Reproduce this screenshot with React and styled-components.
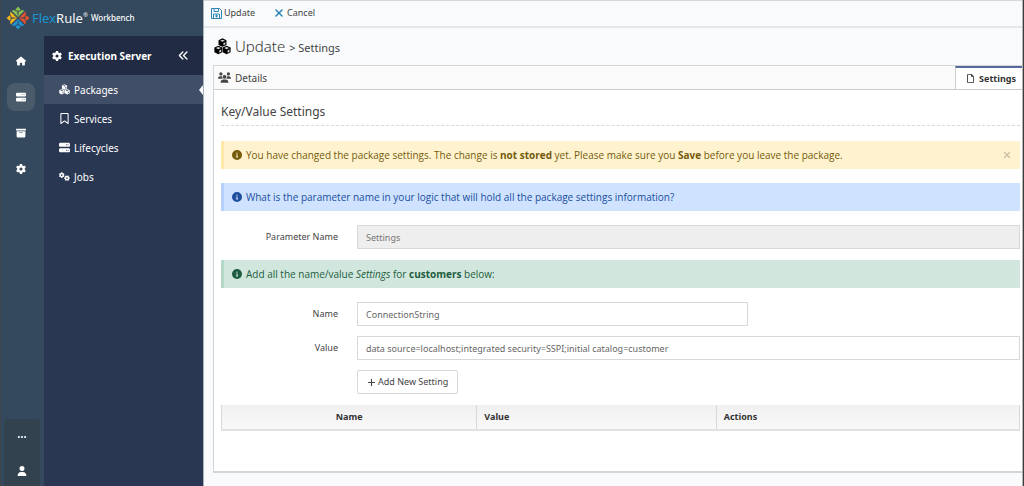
import React from "react";
import styled, { createGlobalStyle, css } from "styled-components";
import { FaHouse, FaServer, FaBoxArchive, FaGear, FaGears, FaRegBookmark, FaUsers, FaRegFile, FaCircleInfo, FaPlus, FaXmark, FaUser, FaEllipsis, FaAnglesLeft } from "react-icons/fa6";

const GlobalStyle = createGlobalStyle`
  * {
    box-sizing: border-box;
  }
  body {
    margin: 0;
    background: #f9fafc;
    color: #444;
    font-family: "Noto Sans", "Open Sans", sans-serif;
    font-size: 10px;
    line-height: 16px;
  }
  a {
    color: inherit;
    text-decoration: none;
  }
  button, input {
    font: inherit;
  }
  svg {
    display: block;
    flex: none;
  }
`;

const Page = styled.div`
  display: flex;
  min-height: 100vh;
  border-right: 1px solid #3c3c3c;
`;

const Sidebar = styled.aside`
  display: flex;
  flex-direction: column;
  flex: none;
  width: 204px;
  color: #fff;
  background: #34495e;
  border-left: 1px solid #3f4548;
  border-right: 1px solid #a9b0bd;
`;

const Brand = styled.a`
  display: flex;
  align-items: center;
  height: 36px;
  padding-left: 5px;
`;

const BrandName = styled.span`
  margin-left: 2px;
  font-size: 13px;
  color: #f4f6f8;

  b {
    color: #1b95d1;
    font-weight: 400;
  }
  sup {
    font-size: 6px;
    line-height: 1;
    vertical-align: 6px;
  }
`;

const BrandSub = styled.span`
  margin-left: 3px;
  font-size: 8px;
  font-weight: 500;
`;

const SideBody = styled.div`
  display: flex;
  flex: 1;
`;

const Rail = styled.nav`
  display: flex;
  flex-direction: column;
  justify-content: space-between;
  width: 43px;
`;

const RailGroup = styled.div`
  display: flex;
  flex-direction: column;
  align-items: center;
  gap: 8px;
  padding: ${(props) => (props.$bottom ? "4px 0 1px" : "11px 3px 0 0")};

  ${(props) =>
    props.$bottom &&
    css`
      gap: 6px;
      margin: 0 4px 0 3px;
      background: #32424f;
      border-radius: 4px 4px 0 0;
    `}
`;

const RailLink = styled.a`
  display: flex;
  align-items: center;
  justify-content: center;
  width: 28px;
  height: 28px;
  border-radius: 8px;
  background: ${(props) => (props.$active ? "#4a5b6c" : "transparent")};
`;

const Menu = styled.nav`
  flex: 1;
  background: #2a3753;
`;

const MenuHeader = styled.div`
  display: flex;
  align-items: center;
  height: 39px;
  padding: 0 14px 0 8px;
  background: #212c44;
  font-weight: 700;

  span {
    flex: 1;
    margin-left: 6px;
  }
`;

const CollapseButton = styled.button`
  padding: 0;
  border: 0;
  color: inherit;
  background: none;
`;

const MenuLink = styled.a`
  position: relative;
  display: flex;
  align-items: center;
  gap: 4px;
  height: 29px;
  padding-left: 14px;
  background: ${(props) => (props.$active ? "#414e68" : "transparent")};

  ${(props) =>
    props.$active &&
    css`
      &::after {
        content: "";
        position: absolute;
        right: 0;
        border: 5px solid transparent;
        border-right: 4px solid #f9fafc;
        border-left: 0;
      }
    `}
`;

const MenuIcon = styled.span`
  display: flex;
  justify-content: center;
  width: 12px;
`;

const Main = styled.main`
  flex: 1;
  min-width: 0;
  border-right: 1px solid #b5b5b5;
`;

const Toolbar = styled.div`
  display: flex;
  gap: 18px;
  height: 28px;
  padding: 0 0 1px 7px;
  border-top: 1px solid #d5d7da;
  border-bottom: 2px solid #e4e6e8;
`;

const ToolButton = styled.button`
  display: flex;
  align-items: center;
  gap: 2px;
  padding: 0;
  border: 0;
  color: #444;
  background: none;
  font-size: 9px;

  svg {
    color: #2d84b5;
  }
`;

const Title = styled.h1`
  display: flex;
  align-items: center;
  gap: 4px;
  height: 37px;
  margin: 0;
  padding-left: 10px;
  color: #333;
  font-size: 15px;
  font-weight: 300;

  svg {
    color: #000;
  }
  small {
    color: #444;
    font-size: 11px;
    font-weight: 400;
  }
`;

const Panel = styled.section`
  margin-left: 9px;
  background: #fff;
  border: 1px solid #d5d5d8;
  border-width: 1px 0 2px 1px;
`;

const Tabs = styled.div`
  display: flex;
  justify-content: space-between;
  height: 24px;
  background: #fafafa;
`;

const Tab = styled.button`
  display: flex;
  align-items: center;
  gap: 4px;
  padding: 0 6px 0 4px;
  border: 0;
  border-bottom: 1px solid #ccc;
  color: #444;
  background: none;

  ${(props) =>
    props.$active
      ? css`
          padding-left: 10px;
          border-top: 2px solid #576a9d;
          border-left: 1px solid #ccc;
          color: #333;
          background: #fff;
          font-size: 9px;
          font-weight: 700;
        `
      : css`
          flex: 1;
        `}
`;

const PanelBody = styled.div`
  padding: 12px 2px 40px 7px;
`;

const Legend = styled.h2`
  margin: 0 0 15px;
  padding-bottom: 3px;
  border-bottom: 1px dashed #d8d8d8;
  color: #444;
  font-size: 12px;
  font-weight: 400;
  line-height: 20px;
`;

const tones = {
  warning: { text: "#755b0b", back: "#fff2ce", edge: "#ffe8a8" },
  info: { text: "#204f9e", back: "#cfe2ff", edge: "#b3d0ff" },
  success: { text: "#1d5c40", back: "#d1e7dd", edge: "#b2d9c6" },
};

const Alert = styled.div`
  display: flex;
  align-items: center;
  gap: 4px;
  height: 28px;
  margin-bottom: 14px;
  padding: 0 8px;
  border-left: 3px solid ${(props) => tones[props.$tone].edge};
  color: ${(props) => tones[props.$tone].text};
  background: ${(props) => tones[props.$tone].back};
  font-family: "Open Sans", "Noto Sans", sans-serif;

  p {
    flex: 1;
    margin: 0;
  }
`;

const CloseButton = styled.button`
  padding: 0;
  border: 0;
  color: #c8bfa5;
  background: none;
`;

const Field = styled.div`
  display: grid;
  grid-template-columns: 117px 1fr;
  gap: 19px;
  align-items: center;
  margin-bottom: ${(props) => (props.$wide ? "11px" : "10px")};

  label {
    font-size: 9px;
    text-align: right;
  }
`;

const Input = styled.input`
  width: ${(props) => (props.$short ? "59%" : "100%")};
  height: 24px;
  padding: 0 8px;
  border: 1px solid #d8d8d8;
  border-radius: 0;
  color: #666;
  background: #fff;
  font-size: 9px;

  &:disabled {
    color: #777;
    background: #eee;
  }
`;

const AddButton = styled.button`
  grid-column: 2;
  justify-self: start;
  display: flex;
  align-items: center;
  gap: 2px;
  height: 24px;
  padding: 0 9px;
  border: 1px solid #d8d8d8;
  border-radius: 2px;
  color: #444;
  background: #fff;
  font-size: 9px;
`;

const Table = styled.table`
  width: 100%;
  table-layout: fixed;
  border-collapse: collapse;

  th {
    height: 25px;
    padding: 0 7px;
    border: 1px solid #d8d8d8;
    border-top: 0;
    border-bottom: 2px solid #e2e2e2;
    color: #333;
    background: linear-gradient(#f0f0f0, #f9f9f9);
    font-size: 9px;
    font-weight: 700;
    text-align: left;
  }
  th:first-child {
    text-align: center;
  }
`;

const Col = styled.col`
  width: ${(props) => props.$width};
`;

const Logo = () => (
  <svg width="24" height="24" viewBox="0 0 24 24" fill="none">
    {[
      ["#2196d3", 0],
      ["#f5b51d", 90],
      ["#8cc152", 180],
      ["#e8512d", 270],
    ].map(([color, turn]) => (
      <g key={color} transform={`rotate(${turn} 12 12)`}>
        <path d="M12 13l6.500 6.500-3.500.5L12 23.500 9 20l-3.500-.5z" fill={color} />
        <path d="M12 14.500v3.500M8 20.500l3-1.500M16 20.500l-3-1.500" stroke="#34495e" />
        <circle cx="12" cy="18.500" r="1" fill="#34495e" />
      </g>
    ))}
  </svg>
);

const CubesIcon = ({ size, line = "#fff" }) => (
  <svg width={size} height={size} viewBox="0 0 18 18">
    {[
      [9, 4.8],
      [4.6, 12.6],
      [13.4, 12.6],
    ].map(([x, y]) => (
      <g key={x} transform={`translate(${x} ${y})`}>
        <path d="M0 -4.500L4.200 -2.500V2.500L0 4.500L-4.200 2.500V-2.500z" fill="currentColor" />
        <path d="M-2.600 -1.900L0 -3L2.600 -1.900L0 -.8zM1 .7L3 -.3V1.900L1 2.900z" fill={line} opacity=".85" />
      </g>
    ))}
  </svg>
);

const MenuCubes = (props) => <CubesIcon {...props} line="#414e68" />;

const SaveIcon = () => (
  <svg width="11" height="11" viewBox="0 0 11 11" fill="none" stroke="currentColor">
    <path d="M.5 .5h8l2 2v8H.5z" />
    <path d="M3 .5v3h4.500v-3M2.500 10V6h6v4" />
    <path d="M5 7h1v2H5z" fill="currentColor" />
  </svg>
);

const railItems = [
  { label: "Home", Icon: FaHouse },
  { label: "Execution Server", Icon: FaServer, active: true },
  { label: "Archive", Icon: FaBoxArchive },
  { label: "Configuration", Icon: FaGear },
];

const menuItems = [
  { label: "Packages", Icon: MenuCubes, active: true },
  { label: "Services", Icon: FaRegBookmark },
  { label: "Lifecycles", Icon: FaServer },
  { label: "Jobs", Icon: FaGears },
];

const App = () => {
  return (
    <>
      <GlobalStyle />
      <Page>
        <Sidebar>
          <Brand href="#">
            <Logo />
            <BrandName><b>Flex</b>Rule<sup>®</sup></BrandName>
            <BrandSub>Workbench</BrandSub>
          </Brand>
          <SideBody>
            <Rail>
              <RailGroup>
                {railItems.map(({ label, Icon, active }) => (
                  <RailLink key={label} href="#" aria-label={label} $active={active}>
                    <Icon size={10} />
                  </RailLink>
                ))}
              </RailGroup>
              <RailGroup $bottom>
                <RailLink href="#" aria-label="More"><FaEllipsis size={10} /></RailLink>
                <RailLink href="#" aria-label="Account"><FaUser size={10} /></RailLink>
              </RailGroup>
            </Rail>
            <Menu>
              <MenuHeader>
                <FaGear size={10} />
                <span>Execution Server</span>
                <CollapseButton aria-label="Collapse"><FaAnglesLeft size={11} /></CollapseButton>
              </MenuHeader>
              {menuItems.map(({ label, Icon, active }) => (
                <MenuLink key={label} href="#" $active={active}>
                  <MenuIcon><Icon size={11} /></MenuIcon>
                  {label}
                </MenuLink>
              ))}
            </Menu>
          </SideBody>
        </Sidebar>

        <Main>
          <Toolbar>
            <ToolButton><SaveIcon />Update</ToolButton>
            <ToolButton><FaXmark size={12} />Cancel</ToolButton>
          </Toolbar>
          <Title>
            <CubesIcon size={17} />
            <span>Update <small>&gt; Settings</small></span>
          </Title>
          <Panel>
            <Tabs>
              <Tab><FaUsers size={13} />Details</Tab>
              <Tab $active><FaRegFile size={9} />Settings</Tab>
            </Tabs>
            <PanelBody>
              <Legend>Key/Value Settings</Legend>
              <Alert $tone="warning">
                <FaCircleInfo size={10} />
                <p>You have changed the package settings. The change is <b>not stored</b> yet. Please make sure you <b>Save</b> before you leave the package.</p>
                <CloseButton aria-label="Close"><FaXmark size={10} /></CloseButton>
              </Alert>
              <Alert $tone="info">
                <FaCircleInfo size={10} />
                <p>What is the parameter name in your logic that will hold all the package settings information?</p>
              </Alert>
              <Field $wide>
                <label htmlFor="parameter">Parameter Name</label>
                <Input id="parameter" defaultValue="Settings" disabled />
              </Field>
              <Alert $tone="success">
                <FaCircleInfo size={10} />
                <p>Add all the name/value <i>Settings</i> for <b>customers</b> below:</p>
              </Alert>
              <Field>
                <label htmlFor="name">Name</label>
                <Input id="name" defaultValue="ConnectionString" $short />
              </Field>
              <Field>
                <label htmlFor="value">Value</label>
                <Input id="value" defaultValue="data source=localhost;integrated security=SSPI;initial catalog=customer" />
              </Field>
              <Field $wide>
                <AddButton><FaPlus size={9} />Add New Setting</AddButton>
              </Field>
              <Table>
                <colgroup>
                  <Col $width="32%" />
                  <Col $width="30%" />
                  <Col />
                </colgroup>
                <thead>
                  <tr>
                    <th>Name</th>
                    <th>Value</th>
                    <th>Actions</th>
                  </tr>
                </thead>
              </Table>
            </PanelBody>
          </Panel>
        </Main>
      </Page>
    </>
  );
};

export default App;
